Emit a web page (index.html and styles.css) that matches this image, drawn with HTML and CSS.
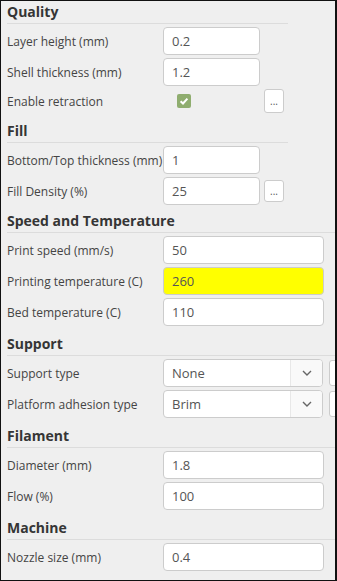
FILE: index.html
```html
<!DOCTYPE html>
<html>
<head>
<meta charset="utf-8">
<link rel="stylesheet" href="styles.css">
</head>
<body>
<div class="panel">
  <section class="sec">
    <h2 class="head narrow">Quality</h2>
    <div class="row"><label class="lbl">Layer height (mm)</label><div class="inp short">0.2</div></div>
    <div class="row"><label class="lbl">Shell thickness (mm)</label><div class="inp short">1.2</div></div>
    <div class="row small"><label class="lbl">Enable retraction</label>
      <div class="cbcell"><span class="cb"><svg width="10" height="10" viewBox="0 0 10 10"><path d="M1.6 5.2 L4 7.5 L8.4 2.6" fill="none" stroke="#fff" stroke-width="2"/></svg></span></div>
      <button class="dots tall">...</button></div>
  </section>
  <section class="sec">
    <h2 class="head narrow">Fill</h2>
    <div class="row"><label class="lbl">Bottom/Top thickness (mm)</label><div class="inp short">1</div></div>
    <div class="row"><label class="lbl">Fill Density (%)</label><div class="inp short">25</div><button class="dots">...</button></div>
  </section>
  <section class="sec tight">
    <h2 class="head">Speed and Temperature</h2>
    <div class="row"><label class="lbl">Print speed (mm/s)</label><div class="inp">50</div></div>
    <div class="row"><label class="lbl">Printing temperature (C)</label><div class="inp warn">260</div></div>
    <div class="row"><label class="lbl">Bed temperature (C)</label><div class="inp">110</div></div>
  </section>
  <section class="sec">
    <h2 class="head">Support</h2>
    <div class="row"><label class="lbl">Support type</label><div class="sel"><span class="selval">None</span><span class="selarrow"><svg width="12" height="8" viewBox="0 0 12 8"><path d="M2 2 L6 6 L10 2" fill="none" stroke="#666" stroke-width="1.4"/></svg></span></div><button class="dots side">...</button></div>
    <div class="row"><label class="lbl">Platform adhesion type</label><div class="sel"><span class="selval">Brim</span><span class="selarrow"><svg width="12" height="8" viewBox="0 0 12 8"><path d="M2 2 L6 6 L10 2" fill="none" stroke="#666" stroke-width="1.4"/></svg></span></div><button class="dots side">...</button></div>
  </section>
  <section class="sec">
    <h2 class="head">Filament</h2>
    <div class="row"><label class="lbl">Diameter (mm)</label><div class="inp">1.8</div></div>
    <div class="row"><label class="lbl">Flow (%)</label><div class="inp">100</div></div>
  </section>
  <section class="sec">
    <h2 class="head">Machine</h2>
    <div class="row"><label class="lbl">Nozzle size (mm)</label><div class="inp">0.4</div></div>
  </section>
</div>
</body>
</html>
```
FILE: styles.css
```css
* { box-sizing: border-box; }
html, body { margin: 0; padding: 0; }
body { width: 337px; height: 581px; overflow: hidden; background: #efefef; }
.panel {
  width: 337px;
  height: 581px;
  border-top: 1px solid #111;
  border-left: 1px solid #111;
  border-bottom: 1px solid #111;
  border-right: 2px solid #111;
  background: #efefef;
  overflow: hidden;
  padding-left: 6px;
  font-family: "Open Sans", "Noto Sans", sans-serif;
  color: #444;
}
.sec { margin-top: 8px; width: 360px; }
.sec:first-child { margin-top: 1px; }
.sec.tight { margin-top: 6px; }
.head {
  margin: 0 0 3px 0;
  font-size: 14px;
  line-height: 20px;
  font-weight: bold;
  color: #353535;
  padding-bottom: 1px;
  border-bottom: 1px solid #dcdcdc;
}
.head.narrow { width: 281px; }
.row {
  display: flex;
  align-items: center;
  height: 28px;
  margin-bottom: 3px;
}
.row.small { height: 24px; }
.lbl {
  width: 156px;
  flex: none;
  font-size: 12px;
  color: #444;
  white-space: nowrap;
}
.inp {
  width: 161px;
  height: 28px;
  background: #fff;
  border: 1px solid #ccc;
  border-radius: 4px;
  font-size: 13px;
  line-height: 26px;
  padding-left: 8px;
  color: #555;
}
.inp.short { width: 97px; }
.inp.warn { background: #ffff00; }
.cbcell { width: 97px; height: 24px; display: flex; align-items: center; padding-left: 14px; }
.cb {
  width: 14px; height: 14px;
  background: #8fad6f;
  border-radius: 2px;
  display: flex; align-items: center; justify-content: center;
}
.dots {
  margin: 0 0 0 4px;
  width: 20px;
  height: 22px;
  padding: 0;
  background: #fff;
  border: 1px solid #ccc;
  border-radius: 3px;
  font-family: "Open Sans", sans-serif;
  font-size: 10px;
  line-height: 16px;
  color: #555;
}
.dots.tall { height: 24px; }
.dots.side { margin-left: 6px; height: 26px; }
.sel {
  width: 160px;
  height: 28px;
  display: flex;
  background: #fff;
  border: 1px solid #ccc;
  border-radius: 4px;
  overflow: hidden;
}
.selval {
  flex: 1;
  font-size: 13px;
  line-height: 26px;
  padding-left: 8px;
  color: #555;
}
.selarrow {
  width: 32px;
  border-left: 1px solid #e8e8e8;
  background: #f9f9f9;
  display: flex; align-items: center; justify-content: center;
}
```
